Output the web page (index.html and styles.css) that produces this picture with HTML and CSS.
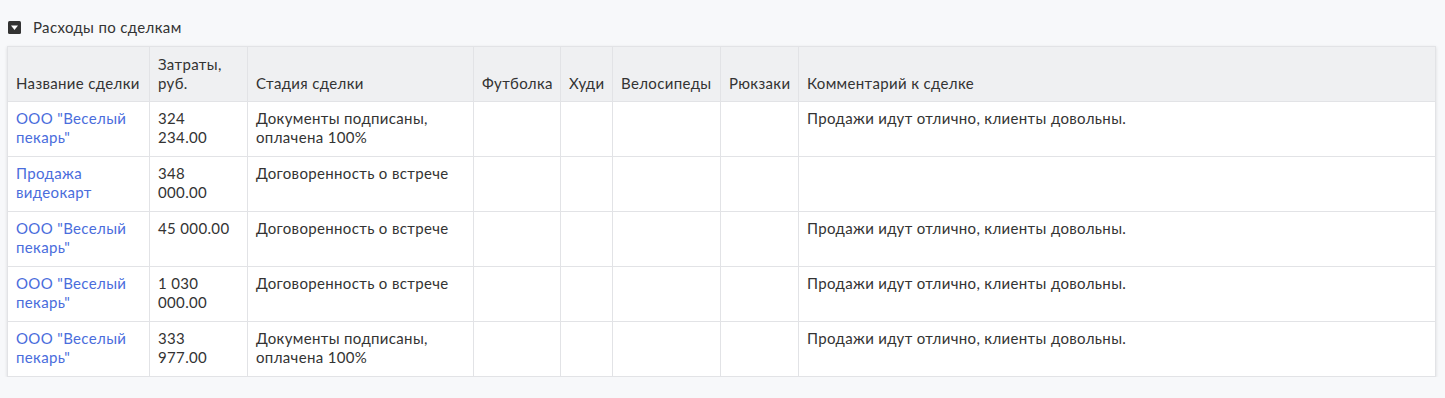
FILE: index.html
```html
<!DOCTYPE html>
<html lang="ru">
<head>
<meta charset="utf-8">
<link rel="stylesheet" href="styles.css">
</head>
<body>
<div class="section">
  <div class="section-title">
    <span class="toggle"><svg width="13" height="13" viewBox="0 0 13 13"><rect width="13" height="13" rx="1.5" fill="#333"/><path d="M3 4.5 L10 4.5 L6.5 9 Z" fill="#fff"/></svg></span>
    <span class="title-text">Расходы по сделкам</span>
  </div>
  <table class="deals">
    <colgroup>
      <col style="width:142px"><col style="width:98px"><col style="width:226px"><col style="width:87px"><col style="width:52px"><col style="width:108px"><col style="width:78px"><col>
    </colgroup>
    <thead>
      <tr>
        <th>Название сделки</th><th class="wrap">Затраты, руб.</th><th>Стадия сделки</th><th>Футболка</th><th>Худи</th><th>Велосипеды</th><th>Рюкзаки</th><th>Комментарий к сделке</th>
      </tr>
    </thead>
    <tbody>
      <tr><td><a class="link">ООО "Веселый пекарь"</a></td><td class="sum">324 234.00</td><td>Документы подписаны, оплачена 100%</td><td></td><td></td><td></td><td></td><td>Продажи идут отлично, клиенты довольны.</td></tr>
      <tr><td><a class="link">Продажа видеокарт</a></td><td class="sum">348 000.00</td><td>Договоренность о встрече</td><td></td><td></td><td></td><td></td><td></td></tr>
      <tr><td><a class="link">ООО "Веселый пекарь"</a></td><td class="sum">45 000.00</td><td>Договоренность о встрече</td><td></td><td></td><td></td><td></td><td>Продажи идут отлично, клиенты довольны.</td></tr>
      <tr><td><a class="link">ООО "Веселый пекарь"</a></td><td class="sum">1 030 000.00</td><td>Договоренность о встрече</td><td></td><td></td><td></td><td></td><td>Продажи идут отлично, клиенты довольны.</td></tr>
      <tr><td><a class="link">ООО "Веселый пекарь"</a></td><td class="sum">333 977.00</td><td>Документы подписаны, оплачена 100%</td><td></td><td></td><td></td><td></td><td>Продажи идут отлично, клиенты довольны.</td></tr>
    </tbody>
  </table>
</div>
</body>
</html>
```
FILE: styles.css
```css
html, body {
  margin: 0;
  padding: 0;
  background: #f7f8fa;
  font-family: Lato, "Noto Sans", sans-serif;
  font-size: 15px;
  letter-spacing: 0.35px;
  color: #333;
}
.section {
  padding: 17px 0 0 7px;
}
.section-title {
  display: flex;
  align-items: center;
  height: 20px;
  margin-bottom: 9px;
  padding-left: 1px;
}
.toggle {
  display: flex;
  width: 13px;
  height: 13px;
  margin-right: 12px;
}
.title-text {
  line-height: 20px;
}
.deals {
  width: 1429px;
  table-layout: fixed;
  border-collapse: collapse;
  background: #fff;
  box-shadow: 0 1px 3px rgba(0,0,0,0.12);
}
.deals th, .deals td {
  border: 1px solid #e2e3e6;
  padding: 7px 6px 8px 8px;
  line-height: 19px;
  text-align: left;
  font-weight: normal;
}
.deals th {
  background: #eff0f2;
  vertical-align: bottom;
  height: 39px;
  padding-bottom: 8px;
  white-space: nowrap;
}
.deals th.wrap {
  white-space: normal;
}
.deals td {
  vertical-align: top;
  height: 39px;
}
.deals td.sum {
  padding-right: 12px;
}
.link {
  color: #4a6ddc;
  text-decoration: none;
}
```
